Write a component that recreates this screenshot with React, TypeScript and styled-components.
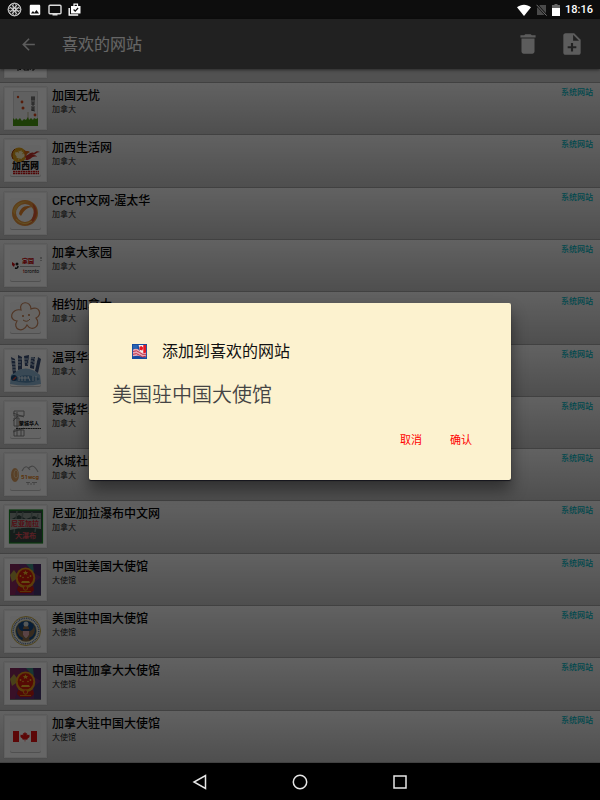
import React from "react";
import styled, { createGlobalStyle } from "styled-components";

const fontStack = `Roboto, "Noto Sans CJK SC", sans-serif`;

const GlobalStyle = createGlobalStyle`
  * { box-sizing: border-box; }
  body { margin: 0; background: #000; font-family: ${fontStack}; }
  button, input { font-family: inherit; }
`;

const Screen = styled.div`
  display: flex;
  flex-direction: column;
  min-height: 100vh;
`;

const StatusBar = styled.header`
  display: flex;
  align-items: center;
  justify-content: space-between;
  height: 19px;
  padding: 0 7px;
  background: #0d0d0d;
  color: #fff;
`;

const StatusGroup = styled.div<{ $gap: number }>`
  display: flex;
  align-items: center;
  gap: ${(p) => p.$gap}px;

  svg { display: block; }
`;

const Clock = styled.time`
  font-size: 11px;
  line-height: 19px;
  font-weight: 500;
`;

const AppArea = styled.div`
  position: relative;
  display: flex;
  flex: 1;
  flex-direction: column;
`;

const Toolbar = styled.div`
  display: flex;
  align-items: center;
  height: 50px;
  padding-right: 6px;
  background: #545454;
  color: #fff;
  box-shadow: 0 1px 3px rgba(0, 0, 0, 0.5);
  z-index: 1;
`;

const IconButton = styled.button<{ $width: number }>`
  display: flex;
  align-items: center;
  justify-content: center;
  width: ${(p) => p.$width}px;
  height: 50px;
  padding: 0;
  border: 0;
  background: none;
  color: #e6e6e6;
`;

const ToolbarTitle = styled.h1`
  flex: 1;
  margin: 0;
  padding: 2px 0 0 6px;
  font-size: 16px;
  line-height: 24px;
  font-weight: 400;
`;

const SiteList = styled.ul`
  display: grid;
  flex: 1;
  grid-template-rows: 14px;
  grid-auto-rows: minmax(52px, 1fr);
  margin: 0;
  padding: 0;
  list-style: none;
`;

const SiteRow = styled.li<{ $cut?: boolean }>`
  display: flex;
  align-items: ${(p) => (p.$cut ? "flex-end" : "flex-start")};
  min-height: 0;
  overflow: hidden;
  gap: 5px;
  padding: ${(p) => (p.$cut ? "0 7px 4px 4px" : "4px 7px 0 4px")};
  border-bottom: 1px solid #a4a4a4;
  background: ${(p) => (p.$cut ? "#cacaca" : "linear-gradient(#f4f4f4, #c4c4c4)")};
`;

const Tile = styled.div`
  flex: none;
  width: 43px;
  height: 43px;
  background: #fff;
  box-shadow: inset 0 0 0 1px #eee, 0 0 1px #999;

  svg { display: block; }
`;

const SiteText = styled.div`
  flex: 1;
  min-width: 0;
`;

const SiteName = styled.h2`
  margin: 0;
  padding-top: 1px;
  font-size: 12px;
  line-height: 16px;
  font-weight: 500;
  color: #000;
`;

const SiteRegion = styled.p`
  margin: 0;
  font-size: 8px;
  line-height: 12px;
  color: #222;
`;

const SiteTag = styled.span`
  font-size: 8px;
  line-height: 12px;
  color: #00b4c0;
  font-weight: 500;
`;

const Scrim = styled.div`
  position: absolute;
  inset: 0;
  z-index: 2;
  display: flex;
  align-items: center;
  justify-content: center;
  padding: 0 89px;
  background: rgba(0, 0, 0, 0.6);
`;

const Dialog = styled.form`
  width: 100%;
  padding: 37px 25px 28px 23px;
  border-radius: 2px;
  background: #fcf2cf;
  box-shadow: 0 1px 1px #15151c, 0 10px 16px rgba(0, 0, 0, 0.45);
`;

const DialogHeading = styled.div`
  display: flex;
  align-items: center;
  gap: 15px;
  padding-left: 20px;

  svg { display: block; }
`;

const DialogTitle = styled.label`
  font-size: 16px;
  line-height: 24px;
  color: #111;
`;

const NameInput = styled.input`
  display: block;
  width: 100%;
  height: 32px;
  margin: 14px 0 16px;
  padding: 0;
  border: 0;
  outline: 0;
  background: none;
  font-size: 20px;
  font-weight: 350;
  color: #444;
`;

const DialogActions = styled.div`
  display: flex;
  justify-content: flex-end;
`;

const DialogButton = styled.button`
  width: 50px;
  height: 26px;
  padding: 0;
  border: 0;
  background: none;
  font-size: 11px;
  color: #f00;
`;

const NavBar = styled.nav`
  display: flex;
  align-items: center;
  justify-content: center;
  height: 37px;
  background: #000;
`;

const NavButton = styled.button`
  display: flex;
  align-items: center;
  justify-content: center;
  width: 100px;
  height: 37px;
  padding: 0;
  border: 0;
  background: none;
`;

const Icon = ({ d, size }: { d: string; size: number }) => (
  <svg width={size} height={size} viewBox="0 0 24 24" fill="currentColor" aria-hidden="true">
    <path d={d} fillRule="evenodd" />
  </svg>
);

const paths = {
  back: "M20 11H7.83l5.59-5.59L12 4l-8 8 8 8 1.41-1.41L7.83 13H20v-2z",
  remove: "M6 19c0 1.1.9 2 2 2h8c1.1 0 2-.9 2-2V7H6v12zM19 4h-3.5l-1-1h-5l-1 1H5v2h14V4z",
  add: "M14 2H6c-1.1 0-2 .9-2 2v16c0 1.1.9 2 2 2h12c1.1 0 2-.9 2-2V8l-6-6zm2 14h-3v3h-2v-3H8v-2h3v-3h2v3h3v2zm-3-7V3.5L18.5 9H13z",
  image: "M21 19V5c0-1.1-.9-2-2-2H5c-1.1 0-2 .9-2 2v14c0 1.1.9 2 2 2h14c1.1 0 2-.9 2-2zM8.5 13.5l2.5 3.01L14.5 12l4.5 6H5l3.5-4.5z",
};

const Wheel = () => (
  <svg width="15" height="15" viewBox="0 0 15 15" fill="none" stroke="#ddd" strokeWidth="0.9" aria-hidden="true">
    <circle cx="7.5" cy="7.5" r="6.4" />
    <circle cx="7.5" cy="7.5" r="1.6" />
    {[0, 45, 90, 135, 180, 225, 270, 315].map((a) => (
      <ellipse key={a} cx="7.5" cy="3.9" rx="1.7" ry="2.5" transform={`rotate(${a} 7.5 7.5)`} strokeWidth="0.8" />
    ))}
  </svg>
);

const Tv = () => (
  <svg width="14" height="12" viewBox="0 0 14 12" aria-hidden="true">
    <rect x="1" y="1.3" width="12" height="8.4" rx="1" fill="none" stroke="#ddd" strokeWidth="1.4" />
    <path d="M4.500 9.500h5v2h-5z" fill="#ddd" />
  </svg>
);

const CheckedBag = () => (
  <svg width="13" height="13" viewBox="0 0 13 13" fill="none" aria-hidden="true">
    <path d="M1.200 5v7h9" stroke="#fff" strokeWidth="1.400" />
    <path d="M3 3h9.500v7.500H3z" fill="#fff" />
    <path d="M6 3V1.200h3.500V3" stroke="#fff" strokeWidth="1.200" />
    <path d="M5.600 6.500l1.600 1.600 2.900-3.100" stroke="#0d0d0d" strokeWidth="1.200" />
  </svg>
);

const Wifi = () => (
  <svg width="14" height="12" viewBox="0 0 14 12" aria-hidden="true">
    <path d="M0 3.2C4-.2 10-.2 14 3.2L7 12z" fill="#fff" />
  </svg>
);

const NoSim = () => (
  <svg width="11" height="12" viewBox="0 0 11 12" aria-hidden="true">
    <path d="M4 1h6v10H1V4z" fill="#4a4a4a" />
    <path d="M0 0l11 12" stroke="#0d0d0d" strokeWidth="2.400" />
    <path d="M.6.800L10.600 11.600" stroke="#777" />
  </svg>
);

const Battery = () => (
  <svg width="8" height="12" viewBox="0 0 8 12" aria-hidden="true">
    <path d="M2.5 0h3v1H8v4H0V1h2.5z" fill="#666" />
    <path d="M0 4h8v8H0z" fill="#fff" />
  </svg>
);

const Card = () => (
  <>
    <rect x="6" y="7" width="31" height="31" rx="2" fill="#c8c8c8" />
    <rect x="6" y="6" width="31" height="31" rx="2" fill="#fbfbfb" />
  </>
);

const Emblem = () => (
  <>
    <rect x="6" y="7" width="31" height="31" fill="#777" />
    <rect x="6" y="6" width="31" height="31" fill="#6b2d73" />
    <path d="M6 6h9l3 10-12 9z" fill="#842a5c" />
    <path d="M6 17l9 4-4 16H6z" fill="#8e2862" />
    <path d="M6 17l4-5 5 7-7 5z" fill="#b7a040" />
    <path d="M22 6h9l3 5-5 3z" fill="#3e8a82" />
    <path d="M29 6h8v13l-7-4z" fill="#4b2866" />
    <path d="M30 25l7-6v18h-7z" fill="#46366f" />
    <ellipse cx="21.5" cy="20" rx="9.800" ry="10.500" fill="#e59a18" />
    <ellipse cx="21.5" cy="19.500" rx="7.800" ry="8.300" fill="#d41a0c" />
    <path d="M21.5 12.2l.8 1.700 1.900.1-1.400 1.200.5 1.800-1.800-1-1.700 1 .4-1.800-1.400-1.200 1.900-.1z" fill="#f5b82b" />
    <g fill="#f5b82b">
      <circle cx="16.500" cy="18" r="0.900" />
      <circle cx="19" cy="19.500" r="0.800" />
      <circle cx="24" cy="19.500" r="0.800" />
      <circle cx="26.500" cy="18" r="0.900" />
      <path d="M18 23h7l1 2H17z" />
    </g>
    <path d="M14 28q7.500 4 15 0l1 4-3 3H16l-3-3z" fill="#c8190e" />
    <circle cx="21.500" cy="30" r="2.200" fill="#d92314" stroke="#e59a18" />
    <path d="M16 33.500h11" stroke="#e59a18" strokeWidth="0.800" />
  </>
);

const leaf =
  "M0-5.200l1 1.900 1.400-.7-.6 3 1.500-1.600.3.900 1.700-.3-.6 1.700.7.5L2.500 2.700l.3 1L.300 3.400V5.500H-.300V3.400L-2.800 3.700l.3-1L-5.400.200l.7-.5-.6-1.700 1.700.3.300-.9 1.500 1.600-.6-3 1.400.7z";

const cjk = `"Noto Sans CJK SC", sans-serif`;

const logos: Record<string, React.ReactNode> = {
  cut: (
    <path d="M14 32l2 3m2-2l-2 2m4-3v3h2m2-3v3m3-3l-1 3m2 0h2v-3M13 35h2m7 0h3" fill="none" stroke="#222" strokeWidth="1" />
  ),
  bbs: (
    <>
      <rect x="9" y="4" width="25" height="35" fill="#f0f0f0" />
      <path d="M9.500 39V4.500h24V39" fill="none" stroke="#ccc" strokeWidth="0.700" />
      <g fill="#d64a1c">
        <circle cx="14" cy="10" r="1.200" />
        <circle cx="18" cy="15" r="1.400" />
        <circle cx="19" cy="21" r="1.500" />
        <circle cx="31" cy="28" r="1.400" />
      </g>
      <path d="M27 10h4m-4 2h4m-3-2v4m2-4v4m-3 3h4m-4-2h4m-2 0v4m-2 1h4m-4 2h4m-2-2v4m-2-1l4 1" fill="none" stroke="#333" strokeWidth="0.800" />
      <path d="M24 25v8" stroke="#aaa278" strokeWidth="0.800" />
      <path d="M9 39v-8l2 2 1-2 2 2 2-2 2 3 2-2 2 1 2-3 1 3 2-2 2 2 1-2 2 1 2-1v8z" fill="#4c9b12" />
    </>
  ),
  west: (
    <>
      <Card />
      <circle cx="15" cy="16" r="7.500" fill="#dfa01b" />
      <path d="M9 20a7.500 7.500 0 0 1 2-10" stroke="#a03a0b" fill="none" />
      <g transform="translate(16 16) rotate(15)" fill="#fff3bf"><path d={leaf} /></g>
      <path d="M20 17c5 0 6-5 10-3 2-2 4-2 6-1-4 0-4 3-8 3 3 0 4 0 5 2-5-2-6 4-12 3 2-1 1-3-1-4z" fill="#c3312a" />
      <path d="M20 11c3 2 4 0 6 2l-3 2-2 4z" fill="#dc6a16" />
      <text x="8" y="30" fontSize="9" fontWeight="900" fontFamily={cjk} fill="#111">加西网</text>
      <path d="M9 32.500h26M9 34.500h26" stroke="#c80d0d" strokeWidth="1.300" strokeDasharray="2 0.500" />
    </>
  ),
  cfc: (
    <>
      <Card />
      <circle cx="21" cy="21" r="11" fill="none" stroke="#e8953c" strokeWidth="4" />
      <path d="M28 11c8 6 6 19-5 22 6-5 9-14 5-22z" fill="#dc5a35" />
      <path d="M9 20c1-8 8-12 16-10-8 0-13 4-14 13z" fill="#f0b64c" />
      <path d="M12 27c4 5 11 6 16 2" stroke="#f8c85b" strokeWidth="1.200" fill="none" />
      <path d="M15 22c1-6 6-10 14-7-5 0-9 3-12 9z" fill="#e8862c" />
    </>
  ),
  home: (
    <>
      <Card />
      <path d="M8 18l3 2-1 3-2-2z" fill="#c40e13" />
      <circle cx="13" cy="20" r="1.500" fill="#222" />
      <path d="M11 24q3 1 3-2" stroke="#111" strokeWidth="1.500" fill="none" />
      <text x="18" y="19" fontSize="6" fontWeight="900" fontFamily={cjk} fill="#c50e13">家园</text>
      <path d="M16 22.500h20" stroke="#888" strokeWidth="0.700" />
      <text x="19" y="29" fontSize="5" fontFamily="Roboto, sans-serif" fill="#111"><tspan fill="#c50e13">t</tspan>oronto</text>
      <path d="M37 13v2m0 1v1" stroke="#777" />
    </>
  ),
  flower: (
    <>
      <Card />
      <path d="M17 14C14 5 27 4 27 13C35 9 39 19 32 22C38 29 28 37 23 29C19 38 8 33 13 25C4 24 7 12 17 14z" fill="#fffaf5" stroke="#c9885f" strokeWidth="1.200" />
      <circle cx="19" cy="20" r="0.900" fill="#bd6932" />
      <circle cx="25" cy="19" r="0.900" fill="#bd6932" />
      <path d="M19 24q4 3 7-1" stroke="#bd8052" fill="none" />
    </>
  ),
  vancouver: (
    <>
      <Card />
      <path d="M7 26q15-13 29 0l1 9q-15 3-31 0z" fill="#8fb6d4" />
      <path d="M8 31q13-9 28-1-12 7-28 1z" fill="#5587ae" />
      <g fill="#3c5278">
        <path d="M7 8l4 2 1 13-3 2z" />
        <path d="M14 6l4 2v12l-4 1z" />
        <path d="M20 7l5-1-1 11h-3z" />
        <path d="M27 8h4l-1 12-4-1z" />
        <path d="M34 8l3 2-3 14-3-2z" />
      </g>
      <path d="M7 11l5 1m-4 3h4m-4 3h4m-3 3h3m1-11h5m-5 3h4m-4 3h4m2-6h5m-5 3h4m2-4h5m-6 3h5m-6 3h5m2-5h4m-5 3h4m-5 3h4" stroke="#d7e5ef" strokeWidth="0.900" />
      <circle cx="10" cy="29" r="3" fill="#174876" />
      <path d="M9 31l3-3" stroke="#d54f45" strokeWidth="1.500" />
      <path d="M15 27v5m3-5v5m3-5v5m3-5l2 5m3-5v5m3-5v5M15 29h10" stroke="#eaf3fa" strokeWidth="0.900" />
    </>
  ),
  montreal: (
    <>
      <Card />
      <path d="M10 10h10v5H10zm0 7h5v8h-5zm0 12h10v6H10zm3-18v24m4-6v6M9 12l11 4M9 20l5-5M9 31l11-4" fill="none" stroke="#888" strokeWidth="1" />
      <text x="15" y="24" fontSize="5" fontWeight="900" fontFamily={cjk} fill="#222">蒙城华人</text>
      <path d="M12 27.500h25" stroke="#333" strokeWidth="1.200" strokeDasharray="2 0.400" />
    </>
  ),
  water: (
    <>
      <Card />
      <ellipse cx="11" cy="22" rx="4" ry="7" fill="#dba063" />
      <ellipse cx="12" cy="21" rx="2" ry="4" fill="none" stroke="#f4d2a3" />
      <path d="M18 18q4-8 8-1m-2-1q5-7 10 3" fill="none" stroke="#aaa" strokeWidth="1.200" />
      <text x="17" y="26" fontSize="6" fontWeight="700" fontFamily="Roboto, sans-serif" fill="#e28013">51wcg</text>
      <path d="M22 29.500h4m2 0h5M24 29v3m3-2v2m3-2v2" stroke="#999" strokeWidth="0.800" />
    </>
  ),
  falls: (
    <>
      <rect x="5.500" y="5" width="33" height="33" fill="#354945" stroke="#198b26" strokeWidth="1.200" />
      <path d="M6 8h31v6l-7-3-8 3-7-4-9 5z" fill="#8d9892" />
      <path d="M13 6l-3 22m9-21l-3 17m12-17l-2 15m8-13l-3 18" stroke="#6b7c77" strokeWidth="1.500" />
      <path d="M6 14h31v10q-15-3-31 1z" fill="#a4aba6" />
      <text x="7" y="21" fontSize="7" fontWeight="700" fontFamily={cjk} fill="#d12231">尼亚加拉</text>
      <text x="11" y="33" fontSize="7" fontWeight="700" fontFamily={cjk} fill="#e0505c">大瀑布</text>
    </>
  ),
  emblem: <Emblem />,
  seal: (
    <>
      <Card />
      <circle cx="22" cy="21" r="14.500" fill="#f5f3e8" stroke="#c8aa43" />
      <circle cx="22" cy="21" r="12.700" fill="none" stroke="#58759f" strokeWidth="1.600" strokeDasharray="1 0.800" />
      <circle cx="22" cy="21" r="10.500" fill="#174b87" stroke="#c8aa43" strokeWidth="0.600" />
      <path d="M14 15q1 6 5 6v-3l1-2h4l1 2v3q4 0 5-6 3 10-5 13l1 3h-8l1-3q-8-3-5-13z" fill="#8a6c4d" />
      <circle cx="22" cy="14" r="2.500" fill="#d7dfde" />
      <path d="M19 19h6v6l-3 3-3-3z" fill="#f1eeee" />
      <path d="M20 21v5m2-5v6m2-6v5" stroke="#b92731" strokeWidth="0.700" />
      <path d="M19 19h6v2h-6z" fill="#28456d" />
    </>
  ),
  canada: (
    <>
      <Card />
      <path d="M9 16h24v11H9z" fill="#fff" />
      <path d="M9 16h6v11H9zM27 16h6v11h-6z" fill="#e51212" />
      <g transform="translate(21 21.500) scale(0.900)" fill="#e51212"><path d={leaf} /></g>
    </>
  ),
};

const Logo = ({ name }: { name: string }) => (
  <Tile>
    <svg width="43" height="43" viewBox="0 0 43 43" aria-hidden="true">{logos[name]}</svg>
  </Tile>
);

const sites = [
  { name: "加国无忧", region: "加拿大", logo: "bbs" },
  { name: "加西生活网", region: "加拿大", logo: "west" },
  { name: "CFC中文网-渥太华", region: "加拿大", logo: "cfc" },
  { name: "加拿大家园", region: "加拿大", logo: "home" },
  { name: "相约加拿大", region: "加拿大", logo: "flower" },
  { name: "温哥华华人网", region: "加拿大", logo: "vancouver" },
  { name: "蒙城华人网", region: "加拿大", logo: "montreal" },
  { name: "水城社区", region: "加拿大", logo: "water" },
  { name: "尼亚加拉瀑布中文网", region: "加拿大", logo: "falls" },
  { name: "中国驻美国大使馆", region: "大使馆", logo: "emblem" },
  { name: "美国驻中国大使馆", region: "大使馆", logo: "seal" },
  { name: "中国驻加拿大大使馆", region: "大使馆", logo: "emblem" },
  { name: "加拿大驻中国大使馆", region: "大使馆", logo: "canada" },
];

export default function App() {
  return (
    <Screen>
      <GlobalStyle />
      <StatusBar>
        <StatusGroup $gap={6}>
          <Wheel />
          <Icon d={paths.image} size={14} />
          <Tv />
          <CheckedBag />
        </StatusGroup>
        <StatusGroup $gap={5}>
          <Wifi />
          <NoSim />
          <Battery />
          <Clock>18:16</Clock>
        </StatusGroup>
      </StatusBar>
      <AppArea>
        <Toolbar>
          <IconButton type="button" $width={56} aria-label="返回"><Icon d={paths.back} size={19} /></IconButton>
          <ToolbarTitle>喜欢的网站</ToolbarTitle>
          <IconButton type="button" $width={44} aria-label="删除"><Icon d={paths.remove} size={26} /></IconButton>
          <IconButton type="button" $width={44} aria-label="添加"><Icon d={paths.add} size={26} /></IconButton>
        </Toolbar>
        <SiteList>
          <SiteRow $cut><Logo name="cut" /></SiteRow>
          {sites.map((s) => (
            <SiteRow key={s.name}>
              <Logo name={s.logo} />
              <SiteText>
                <SiteName>{s.name}</SiteName>
                <SiteRegion>{s.region}</SiteRegion>
              </SiteText>
              <SiteTag>系统网站</SiteTag>
            </SiteRow>
          ))}
        </SiteList>
        <Scrim>
          <Dialog role="dialog" aria-modal="true" onSubmit={(e) => e.preventDefault()}>
            <DialogHeading>
              <svg width="15" height="15" viewBox="0 0 16 16" aria-hidden="true">
                <path d="M0 0h16v16H0z" fill="#164ba0" />
                <path d="M7 1h8v9H9z" fill="#f3eef0" />
                <path d="M12 1h3v10h-3z" fill="#e41622" />
                <path d="M8 3l2-1 2 2-1 3-3-1z" fill="#e41622" />
                <path d="M1 6q4-3 7 1t7 2v5q-4 0-6-1t-8 0z" fill="#e8a9b5" />
                <path d="M1 8q4-2 7 1t7 2M1 11q4-2 7 1t7 1" stroke="#bd2942" fill="none" />
                <path d="M1 1h5v4H1z" fill="#2864b2" />
              </svg>
              <DialogTitle htmlFor="site-name">添加到喜欢的网站</DialogTitle>
            </DialogHeading>
            <NameInput id="site-name" type="text" defaultValue="美国驻中国大使馆" />
            <DialogActions>
              <DialogButton type="button">取消</DialogButton>
              <DialogButton type="submit">确认</DialogButton>
            </DialogActions>
          </Dialog>
        </Scrim>
      </AppArea>
      <NavBar>
        <NavButton type="button" aria-label="后退">
          <svg width="16" height="16" viewBox="0 0 16 16" fill="none" stroke="#e6e6e6" strokeWidth="1.500"><path d="M13.500 1.500v13L2 8z" /></svg>
        </NavButton>
        <NavButton type="button" aria-label="主屏幕">
          <svg width="16" height="16" viewBox="0 0 16 16" fill="none" stroke="#e6e6e6" strokeWidth="1.500"><circle cx="8" cy="8" r="6.700" /></svg>
        </NavButton>
        <NavButton type="button" aria-label="最近任务">
          <svg width="16" height="16" viewBox="0 0 16 16" fill="none" stroke="#e6e6e6" strokeWidth="1.500"><rect x="2" y="2" width="12" height="12" /></svg>
        </NavButton>
      </NavBar>
    </Screen>
  );
}
